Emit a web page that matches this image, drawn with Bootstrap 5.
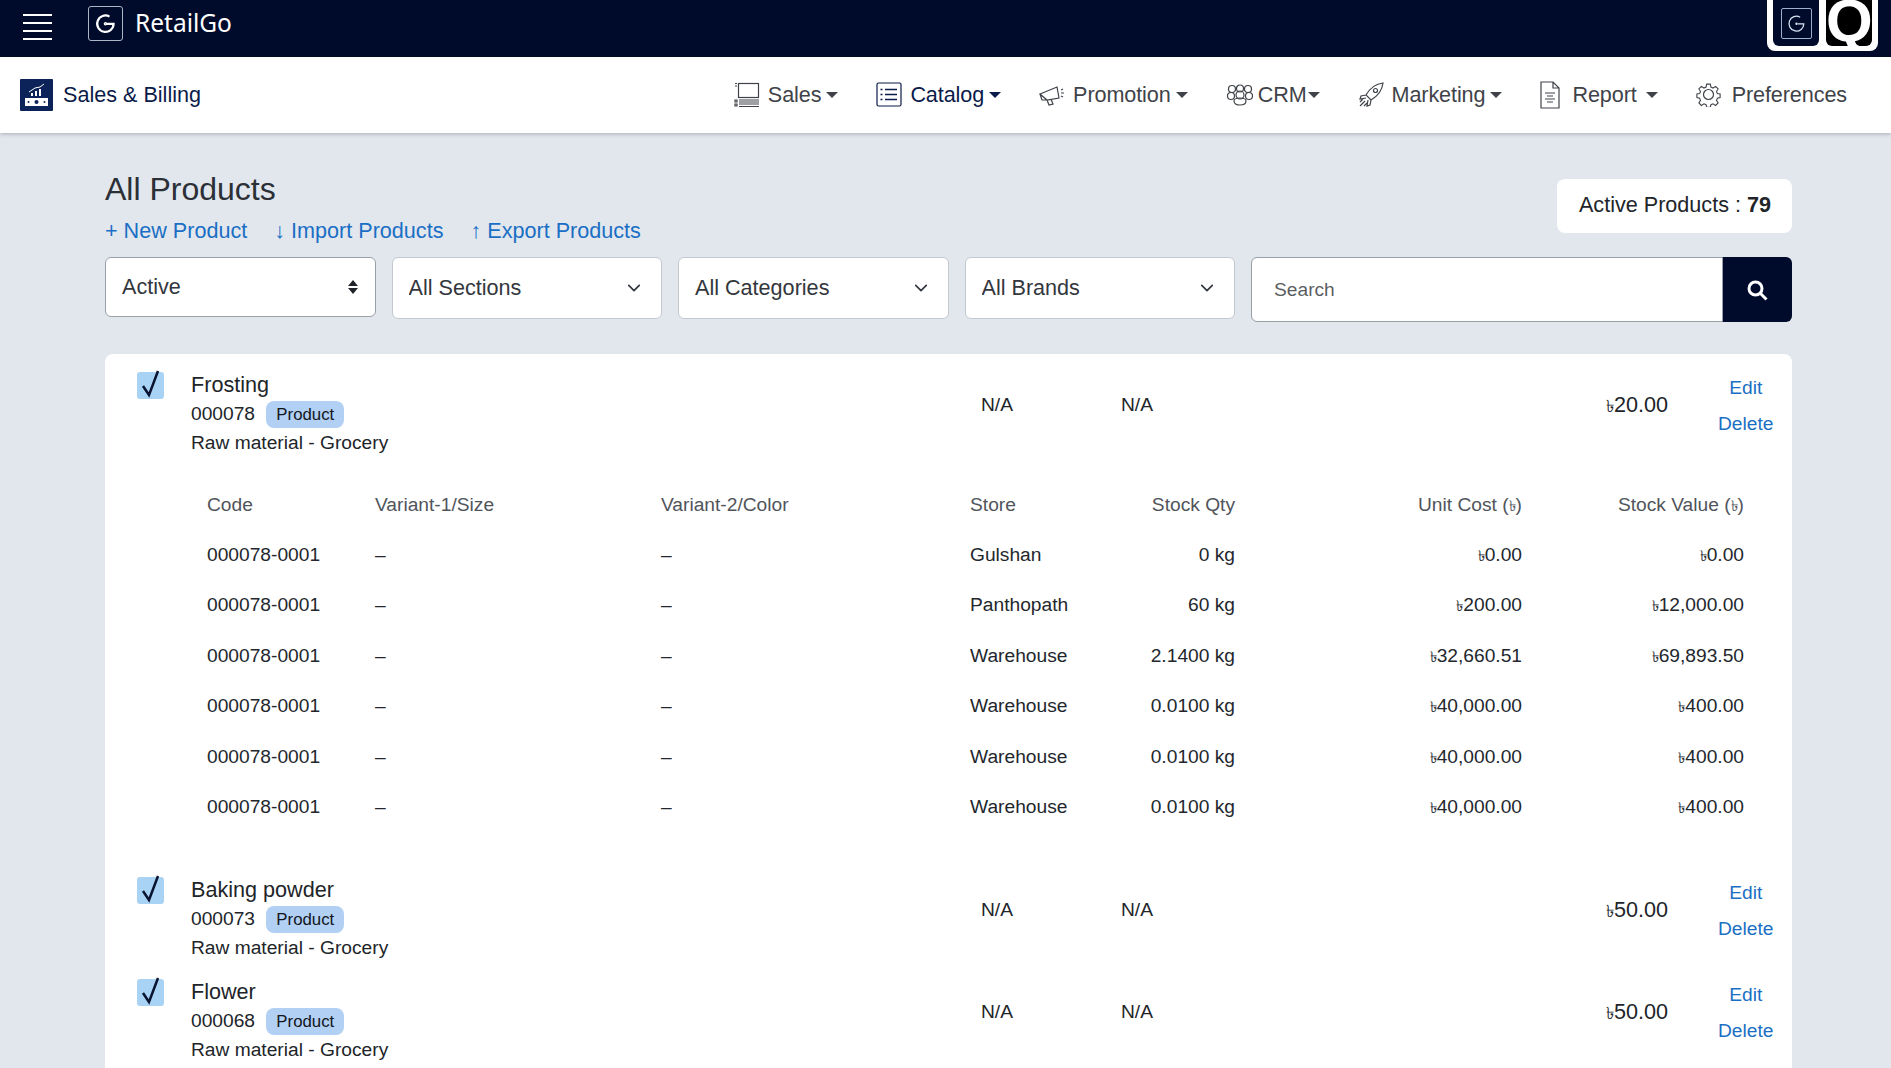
<!DOCTYPE html>
<html lang="en">
<head>
    <meta charset="UTF-8">
    <meta name="viewport" content="width=device-width, initial-scale=1.0">
    <title>All Products - RetailGo</title>
    <link href="https://cdn.jsdelivr.net/npm/bootstrap@5.3.3/dist/css/bootstrap.min.css" rel="stylesheet">
    <style>
        body {
            background-color: #e2e7ee;
            font-family: "Liberation Sans", Arial, sans-serif;
            font-size: 19.2px;
            color: #212529;
        }
        a { text-decoration: none; color: #1a6fc4; }
        .top-bar {
            height: 57px;
            background-color: #000b2c;
            color: #fff;
            padding-left: 23px;
        }
        .burger { width: 29px; margin-top: -9px; }
        .burger span { display: block; height: 2px; background: #fff; margin-top: 6px; }
        .brand-box {
            width: 35px;
            height: 35px;
            margin-left: 36px;
            margin-top: -10px;
            border: 1px solid #aeb6c6;
            border-radius: 3px;
        }
        .brand-name {
            font-family: "Noto Sans", sans-serif;
            font-size: 24.5px;
            margin-left: 12px;
            margin-top: -10px;
        }
        .logo-frame {
            background: #fff;
            width: 111px;
            height: 51px;
            border-radius: 0 0 8px 8px;
            padding: 0 6px 5px 6px;
            margin-right: 13px;
            gap: 7px;
        }
        .logo-dark {
            width: 46px;
            background: #000b2c;
            border-radius: 0 0 6px 6px;
        }
        .logo-inner { width: 31px; height: 31px; border: 1px solid #9fb0cc; border-radius: 2px; }
        .logo-q {
            width: 46px;
            background: #000;
            color: #fff;
            overflow: hidden;
            border-radius: 0 0 6px 6px;
            font-size: 60px;
            font-weight: 700;
            line-height: 42px;
            text-align: center;
        }
        .nav-bar {
            height: 76px;
            background: #fff;
            box-shadow: 0 1px 4px rgba(0, 0, 0, .25);
            padding: 0 44px 0 20px;
        }
        .module-title { color: #0b1b4a; font-size: 21.6px; margin-left: 10px; }
        .main-nav { gap: 38px; }
        .main-nav .nav-link {
            color: #3f4349;
            font-size: 21.6px;
            padding: 0;
            display: flex;
            align-items: center;
            gap: 8px;
            letter-spacing: -.1px;
        }
        .main-nav .nav-link.selected { color: #0b1b4a; }
        .main-nav .dropdown-toggle::after { margin-left: -3px; vertical-align: middle; }
        .nav-ico { fill: none; stroke: currentColor; stroke-width: 1.2; }
        .page-wrap { padding: 37px 99px 0 105px; }
        .page-title { font-size: 32px; font-weight: 400; line-height: 38px; margin: 0; color: #2b2f36; }
        .action-links { gap: 27px; font-size: 21.6px; line-height: 26px; margin-top: 10px; }
        .count-box {
            background: #fff;
            border-radius: 8px;
            height: 54px;
            padding: 0 21px 0 22px;
            font-size: 21.6px;
            margin-top: 9px;
            line-height: 52px;
        }
        .filter-row { gap: 16px; margin-top: 13px; align-items: flex-start; }
        .filter-select {
            width: 270.5px;
            height: 62px;
            font-size: 21.6px;
            color: #33373d;
            border-color: #c4c9d1;
            border-radius: 6px;
            padding-left: 16px;
            background-size: 18px 14px;
            background-position: right 18px center;
        }
        .filter-select.first {
            height: 60px;
            border-color: #9aa0a8;
            background-size: 12px 16px;
            background-position: right 16px center;
            background-image: url("data:image/svg+xml,%3csvg xmlns='http://www.w3.org/2000/svg' viewBox='0 0 12 16'%3e%3cpath fill='%23212529' d='M6 1l5 6H1zM6 15L1 9h10z'/%3e%3c/svg%3e");
        }
        .search-group { flex: 1; height: 65px; }
        .search-group .form-control {
            font-size: 19.2px;
            height: 65px;
            padding-left: 22px;
            border-color: #9aa0a8;
            border-radius: 6px 0 0 6px;
        }
        .search-btn {
            width: 70px;
            background: #000b2c;
            border-radius: 0 6px 6px 0;
            border: 0;
        }
        .list-card {
            background: #fff;
            border-radius: 8px;
            margin-top: 32px;
            padding-top: 16px;
            min-height: 800px;
        }
        .prod-row { display: flex; align-items: flex-start; height: 102px; padding-left: 32px; }
        .tick-box {
            width: 27px;
            height: 27px;
            background: #a9d3f5;
            border-radius: 3px;
            margin-top: 2px;
            flex: none;
        }
        .tick-box svg { display: block; margin: -4px 0 0 0; overflow: visible; }
        .prod-info { width: 790px; margin-left: 27px; line-height: 29px; flex: none; }
        .prod-name { font-size: 21.6px; line-height: 29px; }
        .type-tag {
            display: inline-block;
            background: #b1d0f3;
            color: #12161c;
            font-size: 16.8px;
            line-height: 27px;
            padding: 0 10px;
            border-radius: 8px;
            margin-left: 6px;
        }
        .na-one { width: 140px; flex: none; margin-top: 21px; }
        .na-two { width: 470px; flex: none; margin-top: 21px; }
        .price { width: 77px; flex: none; text-align: right; font-size: 21.6px; margin-top: 19px; white-space: nowrap; }
        .row-actions { flex: 1; text-align: center; line-height: 36px; font-size: 19.2px; padding-left: 50px; padding-right: 24px; }
        .row-actions a { display: block; }
        .stock-wrap { padding: 0 31px 0 85px; margin-top: 8px; margin-bottom: 42px; }
        .stock-table { table-layout: fixed; width: 1571px; margin: 0; font-size: 19.2px; }
        .stock-table th, .stock-table td { padding: 0 17px; height: 50.5px; vertical-align: middle; color: #23272d; }
        .stock-table th { font-weight: 400; color: #50545b; height: 50px; }
        .taka { font-size: .8em; }
    </style>
</head>
<body class="vh-100 overflow-hidden">

<div class="top-bar d-flex align-items-center">
    <div class="burger"><span></span><span></span><span></span><span></span></div>
    <div class="brand-box d-flex align-items-center justify-content-center">
        <svg width="21" height="21" viewBox="0 0 21 21" fill="none" stroke="#fff" stroke-width="2.2"><path d="M14.5 3.6A8.2 8.2 0 1 0 18.6 10.8H12"/><circle cx="10.5" cy="10.8" r=".7"/></svg>
    </div>
    <div class="brand-name">RetailGo</div>
    <div class="logo-frame d-flex ms-auto align-self-start">
        <div class="logo-dark d-flex align-items-center justify-content-center">
            <div class="logo-inner d-flex align-items-center justify-content-center">
                <svg width="19" height="19" viewBox="0 0 21 21" fill="none" stroke="#dbe4f3" stroke-width="1.4"><path d="M14.5 3.6A8.2 8.2 0 1 0 18.6 10.8H12"/><circle cx="10.5" cy="10.8" r=".6"/></svg>
            </div>
        </div>
        <div class="logo-q">Q</div>
    </div>
</div>

<nav class="nav-bar d-flex align-items-center justify-content-between">
    <div class="d-flex align-items-center">
        <svg width="33" height="32" viewBox="0 0 33 32"><rect width="33" height="32" rx="1" fill="#0b2358"/><path d="M5 19h23v8H5z" fill="#fff"/><circle cx="16.500" cy="23" r="2" fill="#0b2358"/><circle cx="8.500" cy="23" r="1" fill="#0b2358"/><circle cx="24.500" cy="23" r="1" fill="#0b2358"/><path d="M12 17v-3M16 17v-5M20 17v-7" stroke="#fff" stroke-width="2"/><path d="M9 13l6-4 5-1 4-3" stroke="#fff" fill="none"/></svg>
        <span class="module-title">Sales &amp; Billing</span>
    </div>
    <ul class="navbar-nav flex-row main-nav">
        <li class="nav-item">
            <a class="nav-link dropdown-toggle" href="#">
                <svg class="nav-ico" width="26" height="26" viewBox="0 0 26 26"><rect x="4.500" y="1.500" width="20" height="14"/><path d="M1 1.500h2M1 4h2M1 18h2v2H1zM1 22h2v2H1zM5 18h20M5 20h20M5 22h20M5 24.500h20"/></svg>Sales
            </a>
        </li>
        <li class="nav-item">
            <a class="nav-link dropdown-toggle selected" href="#">
                <svg class="nav-ico" width="26" height="25" viewBox="0 0 26 25"><rect x="1" y="1" width="24" height="23" rx="1.500"/><path d="M9 7.500h12M9 12.500h12M9 17.500h12M4.500 7.500h2M4.500 12.500h2M4.500 17.500h2" stroke-width="1.500"/></svg>Catalog
            </a>
        </li>
        <li class="nav-item">
            <a class="nav-link dropdown-toggle" href="#">
                <svg class="nav-ico" width="26" height="22" viewBox="0 0 26 22"><path d="M1 10l17-7 2 11-12 2zM1 10l2 6 5 0M8 16l2 5 4-1-2-5M22 6l2-1M22 9h3M22 12l2 1"/></svg>Promotion
            </a>
        </li>
        <li class="nav-item">
            <a class="nav-link dropdown-toggle" href="#" style="gap:4px">
                <svg class="nav-ico" width="28" height="22" viewBox="0 0 28 22"><circle cx="6" cy="5" r="3.500"/><circle cx="14" cy="4.500" r="3.500"/><circle cx="22" cy="5" r="3.500"/><circle cx="5" cy="12" r="3.500"/><circle cx="23" cy="12" r="3.500"/><circle cx="14" cy="11" r="4"/><path d="M8 17c0-3 3-3 6-3s6 0 6 3-3 4-6 4-6-1-6-4z"/></svg>CRM
            </a>
        </li>
        <li class="nav-item">
            <a class="nav-link dropdown-toggle" href="#">
                <svg class="nav-ico" width="26" height="26" viewBox="0 0 26 26"><path d="M25 1c-8 1-13 5-17 12l5 5c7-4 11-9 12-17zM8 13l-5 1-1 3 6-1M13 18l-1 5-3 1 1-6M7 19l-5 5M5 17l-3 3M9 21l-3 3"/><circle cx="17.500" cy="8.500" r="2"/></svg>Marketing
            </a>
        </li>
        <li class="nav-item">
            <a class="nav-link dropdown-toggle" href="#" style="gap:12px">
                <svg class="nav-ico" width="20" height="28" viewBox="0 0 20 28"><path d="M1 1h12l6 6v20H1zM13 1v6h6M5 12h10M7 15h6M5 18h10M7 21h6"/></svg>Report
            </a>
        </li>
        <li class="nav-item">
            <a class="nav-link" href="#" style="gap:11px">
                <svg class="nav-ico" width="25" height="25" viewBox="0 0 25 25"><circle cx="12.500" cy="12.500" r="5"/><path d="M10.500 1h4l.7 3.300 2.300 1 2.900-1.800 2.800 2.800-1.800 2.900 1 2.300 3 .5v4l-3 .7-1 2.300 1.800 2.900-2.800 2.800-2.900-1.800-2.300 1-.7 2.900h-4l-.7-2.900-2.300-1-2.900 1.800-2.800-2.800 1.800-2.900-1-2.300-3-.7v-4l3-.5 1-2.300-1.800-2.900 2.800-2.800 2.900 1.800 2.300-1z" transform="translate(1.250 1.250) scale(.9)"/></svg>Preferences
            </a>
        </li>
    </ul>
</nav>

<div class="page-wrap">
    <div class="d-flex justify-content-between align-items-start">
        <div>
            <h1 class="page-title">All Products</h1>
            <div class="d-flex action-links">
                <a href="#">+ New Product</a>
                <a href="#">↓ Import Products</a>
                <a href="#">↑ Export Products</a>
            </div>
        </div>
        <div class="count-box">Active Products : <b>79</b></div>
    </div>

    <div class="d-flex filter-row">
        <select class="form-select filter-select first"><option>Active</option></select>
        <select class="form-select filter-select"><option>All Sections</option></select>
        <select class="form-select filter-select"><option>All Categories</option></select>
        <select class="form-select filter-select"><option>All Brands</option></select>
        <div class="input-group search-group">
            <input type="text" class="form-control" placeholder="Search">
            <button type="button" class="search-btn d-flex align-items-center justify-content-center">
                <svg width="22" height="22" viewBox="0 0 22 22" fill="none" stroke="#fff" stroke-width="3"><circle cx="9.500" cy="9.500" r="6.500"/><path d="M14.500 14.500l6 6"/></svg>
            </button>
        </div>
    </div>

    <div class="list-card">
        <div class="prod-row">
            <div class="tick-box"><svg width="27" height="31" viewBox="0 0 27 31" fill="none" stroke="#0a1430" stroke-width="2.500"><path d="M6 18l6 9L21 3"/></svg></div>
            <div class="prod-info">
                <div class="prod-name">Frosting</div>
                <div>000078 <span class="type-tag">Product</span></div>
                <div>Raw material - Grocery</div>
            </div>
            <div class="na-one">N/A</div>
            <div class="na-two">N/A</div>
            <div class="price"><span class="taka">৳</span>20.00</div>
            <div class="row-actions"><a href="#">Edit</a><a href="#">Delete</a></div>
        </div>

        <div class="stock-wrap">
            <table class="table table-borderless stock-table">
                <colgroup>
                    <col style="width:168px"><col style="width:286px"><col style="width:309px"><col style="width:166px"><col style="width:133px"><col style="width:287px"><col style="width:222px">
                </colgroup>
                <thead>
                <tr>
                    <th>Code</th><th>Variant-1/Size</th><th>Variant-2/Color</th><th>Store</th>
                    <th class="text-end">Stock Qty</th><th class="text-end">Unit Cost (<span class="taka">৳</span>)</th><th class="text-end">Stock Value (<span class="taka">৳</span>)</th>
                </tr>
                </thead>
                <tbody>
                <tr><td>000078-0001</td><td>–</td><td>–</td><td>Gulshan</td><td class="text-end">0 kg</td><td class="text-end"><span class="taka">৳</span>0.00</td><td class="text-end"><span class="taka">৳</span>0.00</td></tr>
                <tr><td>000078-0001</td><td>–</td><td>–</td><td>Panthopath</td><td class="text-end">60 kg</td><td class="text-end"><span class="taka">৳</span>200.00</td><td class="text-end"><span class="taka">৳</span>12,000.00</td></tr>
                <tr><td>000078-0001</td><td>–</td><td>–</td><td>Warehouse</td><td class="text-end">2.1400 kg</td><td class="text-end"><span class="taka">৳</span>32,660.51</td><td class="text-end"><span class="taka">৳</span>69,893.50</td></tr>
                <tr><td>000078-0001</td><td>–</td><td>–</td><td>Warehouse</td><td class="text-end">0.0100 kg</td><td class="text-end"><span class="taka">৳</span>40,000.00</td><td class="text-end"><span class="taka">৳</span>400.00</td></tr>
                <tr><td>000078-0001</td><td>–</td><td>–</td><td>Warehouse</td><td class="text-end">0.0100 kg</td><td class="text-end"><span class="taka">৳</span>40,000.00</td><td class="text-end"><span class="taka">৳</span>400.00</td></tr>
                <tr><td>000078-0001</td><td>–</td><td>–</td><td>Warehouse</td><td class="text-end">0.0100 kg</td><td class="text-end"><span class="taka">৳</span>40,000.00</td><td class="text-end"><span class="taka">৳</span>400.00</td></tr>
                </tbody>
            </table>
        </div>

        <div class="prod-row">
            <div class="tick-box"><svg width="27" height="31" viewBox="0 0 27 31" fill="none" stroke="#0a1430" stroke-width="2.500"><path d="M6 18l6 9L21 3"/></svg></div>
            <div class="prod-info">
                <div class="prod-name">Baking powder</div>
                <div>000073 <span class="type-tag">Product</span></div>
                <div>Raw material - Grocery</div>
            </div>
            <div class="na-one">N/A</div>
            <div class="na-two">N/A</div>
            <div class="price"><span class="taka">৳</span>50.00</div>
            <div class="row-actions"><a href="#">Edit</a><a href="#">Delete</a></div>
        </div>

        <div class="prod-row">
            <div class="tick-box"><svg width="27" height="31" viewBox="0 0 27 31" fill="none" stroke="#0a1430" stroke-width="2.500"><path d="M6 18l6 9L21 3"/></svg></div>
            <div class="prod-info">
                <div class="prod-name">Flower</div>
                <div>000068 <span class="type-tag">Product</span></div>
                <div>Raw material - Grocery</div>
            </div>
            <div class="na-one">N/A</div>
            <div class="na-two">N/A</div>
            <div class="price"><span class="taka">৳</span>50.00</div>
            <div class="row-actions"><a href="#">Edit</a><a href="#">Delete</a></div>
        </div>
    </div>
</div>

<script src="https://cdn.jsdelivr.net/npm/bootstrap@5.3.3/dist/js/bootstrap.bundle.min.js"></script>
</body>
</html>
